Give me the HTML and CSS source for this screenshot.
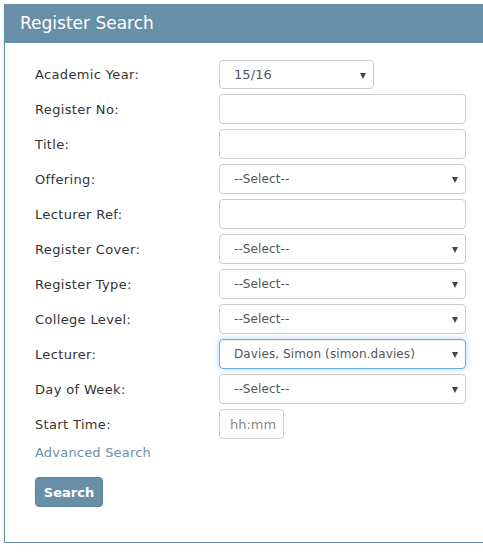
FILE: index.html
```html
<!DOCTYPE html>
<html>
<head>
<meta charset="utf-8">
<link rel="stylesheet" href="styles.css">
</head>
<body>
<div class="panel">
  <div class="panel-heading">Register Search</div>
  <div class="panel-body">
    <div class="form">
      <div class="row"><label>Academic Year:</label><div class="select short"><span>15/16</span></div></div>
      <div class="row"><label>Register No:</label><div class="input"></div></div>
      <div class="row"><label>Title:</label><div class="input"></div></div>
      <div class="row"><label>Offering:</label><div class="select"><span>--Select--</span></div></div>
      <div class="row"><label>Lecturer Ref:</label><div class="input"></div></div>
      <div class="row"><label>Register Cover:</label><div class="select"><span>--Select--</span></div></div>
      <div class="row"><label>Register Type:</label><div class="select"><span>--Select--</span></div></div>
      <div class="row"><label>College Level:</label><div class="select"><span>--Select--</span></div></div>
      <div class="row"><label>Lecturer:</label><div class="select focus"><span>Davies, Simon (simon.davies)</span></div></div>
      <div class="row"><label>Day of Week:</label><div class="select"><span>--Select--</span></div></div>
      <div class="row"><label>Start Time:</label><div class="input time"><span class="ph">hh:mm</span></div></div>
    </div>
    <a class="adv" href="#">Advanced Search</a>
    <button class="btn">Search</button>
  </div>
</div>
</body>
</html>
```
FILE: styles.css
```css
html, body { margin: 0; padding: 0; background: #fff; overflow: hidden; }
body { padding: 4px 0 0 4px; font-family: "DejaVu Sans", Verdana, sans-serif; font-size: 13px; color: #333; }
.panel {
  width: 500px;
  border: 1px solid #688fa8;
  box-shadow: 0 1px 4px rgba(0,0,0,0.12);
  background: #fff;
}
.panel-heading {
  background: #688fa8;
  color: #fff;
  height: 39px;
  line-height: 39px;
  padding-left: 16px;
  font-size: 17px;
  margin: -1px 0 0 -1px;
}
.panel-body { padding: 16px 30px 35px 30px; display: flex; flex-direction: column; align-items: flex-start; }
.form { display: flex; flex-direction: column; gap: 5px; }
.row { display: flex; align-items: center; height: 30px; }
.row label { width: 184px; flex: none; letter-spacing: 0.35px; padding-top: 1px; }
.input, .select {
  box-sizing: border-box;
  width: 247px;
  height: 30px;
  border: 1px solid #ccc;
  border-radius: 4px;
  background: #fff;
  display: flex;
  align-items: center;
  color: #555;
  position: relative;
  font-size: 12px;
  letter-spacing: 0.1px;
}
.select span { padding-left: 14px; }
.select::after {
  content: "";
  position: absolute;
  right: 7px;
  top: 12px;
  border-left: 3.5px solid transparent;
  border-right: 3.5px solid transparent;
  border-top: 6px solid #444;
}
.select.short { width: 155px; height: 29px; font-size: 13px; }
.select.focus {
  border-color: #66afe9;
  box-shadow: inset 0 1px 1px rgba(0,0,0,0.075), 0 0 6px rgba(102,175,233,0.5);
}
.input.time { width: 65px; font-size: 13px; letter-spacing: 0; }
.ph { color: #888; padding-left: 10px; }
.adv { color: #6b91aa; text-decoration: none; margin-top: 6px; line-height: 16px; letter-spacing: 0.2px; }
.btn {
  margin-top: 16px;
  width: 68px;
  height: 30px;
  background: #688fa8;
  border: 1px solid #5b8199;
  border-radius: 4px;
  color: #fff;
  font-family: "DejaVu Sans", Verdana, sans-serif;
  font-weight: bold;
  font-size: 13px;
  padding: 0;
}
```
